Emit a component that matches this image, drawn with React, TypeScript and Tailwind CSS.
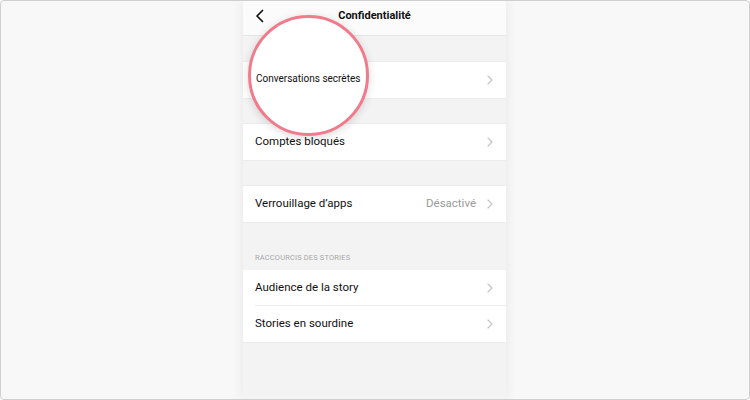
import React from 'react';

const Chevron = () => (
  <svg width="6" height="10" viewBox="0 0 6 10" className="shrink-0">
    <path d="M1 1l4 4-4 4" fill="none" stroke="#c4c4c8" strokeWidth="1.1" strokeLinecap="round" strokeLinejoin="round" />
  </svg>
);

function Row({ label, value, divider }: { label?: string; value?: string; divider?: boolean }) {
  return (
    <div className="h-[36px] bg-white pl-[12px] flex">
      <div className={`flex-1 flex items-center pr-[13px] ${divider ? 'border-b border-[#ececec]' : ''}`}>
        <span className="flex-1 text-[11.5px] text-[#111]">{label}</span>
        {value && <span className="text-[11.5px] text-[#9a9a9a] mr-[11px]">{value}</span>}
        <Chevron />
      </div>
    </div>
  );
}

export default function App() {
  return (
    <div className="w-[750px] h-[400px] bg-[#f8f8f8] border border-[#cfcfcf] rounded-[4px] flex justify-center overflow-hidden" style={{ fontFamily: 'Roboto, "Noto Sans", sans-serif' }}>
      <div className="relative w-[263px] h-full bg-[#f3f3f3] shadow-[0_0_12px_rgba(0,0,0,0.08)] flex flex-col -ml-[1px]">
        {/* header */}
        <div className="h-[35px] bg-[#fbfbfb] border-b border-[#e6e6e6] flex items-center px-[12px] shrink-0">
          <svg width="10" height="14" viewBox="0 0 10 14" className="-mt-[4px]">
            <path d="M7.5 1.5L2 7l5.5 5.5" fill="none" stroke="#111" strokeWidth="1.7" strokeLinecap="round" strokeLinejoin="round" />
          </svg>
          <span className="flex-1 text-center text-[11px] font-bold text-[#111] mr-[10px] -mt-[3px]">Confidentialité</span>
        </div>

        <div className="h-[25px]" />
        <div className="border-y border-[#ececec]"><Row /></div>
        <div className="h-[24px]" />
        <div className="border-y border-[#ececec]"><Row label="Comptes bloqués" /></div>
        <div className="h-[24px]" />
        <div className="border-y border-[#ececec]"><Row label="Verrouillage d’apps" value="Désactivé" /></div>
        <div className="h-[47px] flex items-end px-[12px] pb-[7px]">
          <span className="text-[7.5px] tracking-[0.02em] text-[#a8a8a8]">RACCOURCIS DES STORIES</span>
        </div>
        <div className="border-b border-[#ececec]">
          <Row label="Audience de la story" divider />
          <Row label="Stories en sourdine" />
        </div>

        {/* magnifier */}
        <div className="absolute left-[5px] top-[14px] w-[121px] h-[121px] rounded-full bg-white border-[3px] border-[#f27b8b] shadow-[0_2px_8px_rgba(0,0,0,0.15)] flex items-center pl-[5px]">
          <span className="whitespace-nowrap text-[10px] text-[#111] mt-[6px]">Conversations secrètes</span>
        </div>
      </div>
    </div>
  );
}
